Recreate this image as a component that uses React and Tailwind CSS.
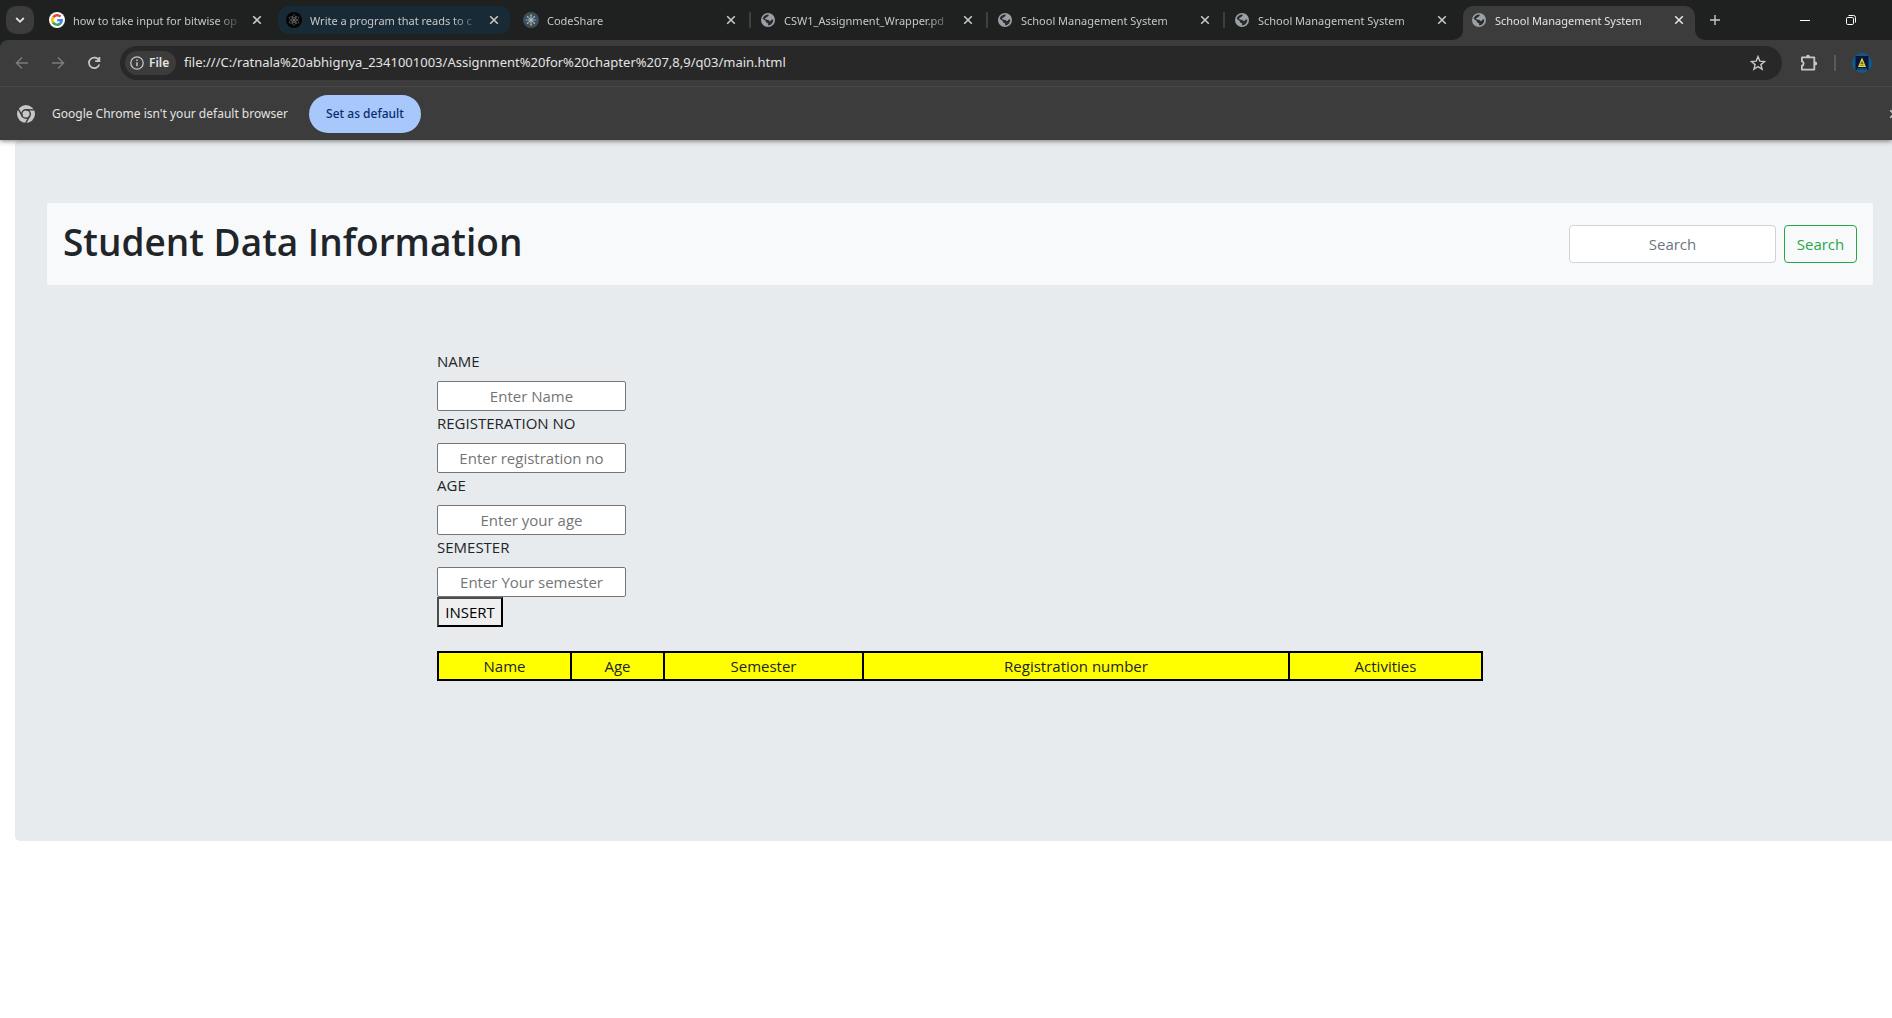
import React from 'react';

function GoogleIcon() {
  return (
    <svg viewBox="0 0 16 16" className="size-4 shrink-0" aria-hidden="true">
      <circle cx="8" cy="8" r="8" fill="#fff" />
      <g fill="none" strokeWidth="2.4">
        <path d="M4.2 5.4A4.8 4.8 0 0 1 11.6 4.6" stroke="#ea4335" />
        <path d="M4.2 5.2A4.8 4.8 0 0 0 4.2 10.8" stroke="#fbbc05" />
        <path d="M4 10.5A4.8 4.8 0 0 0 11.2 11.5" stroke="#34a853" />
        <path d="M11 11.7A4.8 4.8 0 0 0 12.8 8.2H8.2" stroke="#4285f4" />
      </g>
    </svg>
  );
}

const spokes = [0, 45, 90, 135, 180, 225, 270, 315];

function AtomIcon() {
  return (
    <svg viewBox="0 0 16 16" className="size-4 shrink-0" aria-hidden="true">
      <circle cx="8" cy="8" r="8" fill="#050505" />
      <g fill="none" stroke="#a9a9a9" strokeWidth="0.7" strokeDasharray="0.8 0.7">
        <ellipse cx="8" cy="8" rx="2" ry="5.3" />
        <ellipse cx="8" cy="8" rx="2" ry="5.3" transform="rotate(60 8 8)" />
        <ellipse cx="8" cy="8" rx="2" ry="5.3" transform="rotate(120 8 8)" />
      </g>
      <circle cx="8" cy="8" r="1" fill="#8a8a8a" />
    </svg>
  );
}

function CodeShareIcon() {
  const tips = ['#f0c35a', '#63d2e8', '#e8596b', '#63d2e8', '#f0c35a', '#63d2e8', '#e8596b', '#63d2e8'];
  return (
    <svg viewBox="0 0 16 16" className="size-4 shrink-0" aria-hidden="true">
      <circle cx="8" cy="8" r="8" fill="#3b4f5c" />
      {spokes.map((a, i) => (
        <g key={a} transform={`rotate(${a} 8 8)`}>
          <path d="M8 8V4.6" stroke="#b9c3cb" strokeWidth="1" />
          <path d="M8 4.4V2.6" stroke={tips[i]} strokeWidth="1.4" />
        </g>
      ))}
    </svg>
  );
}

function GlobeIcon() {
  return (
    <svg viewBox="0 0 16 16" className="size-4 shrink-0" aria-hidden="true">
      <circle cx="8" cy="8" r="7" fill="#9aa0a6" />
      <path
        d="M8.6 2.6C9 4 8.2 4.6 7 5c-.4 1-1 1.2-2 1.3.2 1 1 1.1 2.2 1.1 1.2 0 2 .5 2.1 1.6 1 .2 1.7-.2 2-1.2.6-.4 1.2-.5 2-.3C13.4 10.8 11 13.4 8.1 13.4v-1.3c0-.7-.5-1.2-1.3-1.3-.8-.2-1.1-.8-1.1-1.7L2.7 6.7C3.3 4.4 5.6 2.5 8.6 2.6Z"
        fill="#2b2c2c"
      />
      <path d="M4.8 6.4C5 5.9 6.2 6 7 5.2l1.6-.4 2 1.4-.6 1.6H7Z" fill="#9aa0a6" />
    </svg>
  );
}

function CloseIcon() {
  return (
    <svg viewBox="0 0 10 10" className="size-[10px]" fill="none" stroke="currentColor" strokeWidth="1.6" aria-hidden="true">
      <path d="M1.2 1.2l7.6 7.6M8.8 1.2L1.2 8.8" />
    </svg>
  );
}

function ChromeIcon() {
  return (
    <svg viewBox="0 0 18 18" className="size-[18px] shrink-0" aria-hidden="true">
      <circle cx="9" cy="9" r="9" fill="#c7c7c7" />
      <circle cx="9" cy="9" r="4.3" fill="none" stroke="#3c3c3c" strokeWidth="1.5" />
      <g stroke="#3c3c3c" strokeWidth="1.4" fill="none">
        <path d="M9 4.8H17.5" />
        <path d="M9 4.8H17.5" transform="rotate(120 9 9)" />
        <path d="M9 4.8H17.5" transform="rotate(240 9 9)" />
      </g>
    </svg>
  );
}

const tabs = [
  { title: 'how to take input for bitwise op', Icon: GoogleIcon },
  { title: 'Write a program that reads to c', Icon: AtomIcon, tinted: true },
  { title: 'CodeShare', Icon: CodeShareIcon, divider: true },
  { title: 'CSW1_Assignment_Wrapper.pd', Icon: GlobeIcon, divider: true },
  { title: 'School Management System', Icon: GlobeIcon, divider: true },
  { title: 'School Management System', Icon: GlobeIcon },
  { title: 'School Management System', Icon: GlobeIcon, active: true },
];

function Tab({ title, Icon, tinted, divider, active }) {
  const shape = active
    ? 'rounded-t-[10px] bg-[#3c3c3c] text-[#e3e3e3] h-[34px] pb-[6px]'
    : tinted
      ? 'rounded-[10px] bg-[#182a35] text-[#c7c7c7] h-7'
      : 'text-[#c7c7c7] h-7';
  return (
    <div className="relative w-[237px] min-w-0 pr-1 pl-px">
      <div className={`relative flex items-center pr-[11px] pl-2 ${shape}`}>
        <Icon />
        <a
          href="#tab"
          className="ml-2 h-5 min-w-0 flex-1 overflow-hidden text-[11px] leading-[22px] whitespace-nowrap [mask-image:linear-gradient(to_right,#000_calc(100%-28px),transparent)]"
        >
          {title}
        </a>
        <button type="button" aria-label={`Close ${title}`} className="ml-2 shrink-0">
          <CloseIcon />
        </button>
        {active && (
          <>
            <svg viewBox="0 0 10 10" className="absolute bottom-0 -left-[10px] size-[10px]" aria-hidden="true">
              <path d="M10 0V10H0A10 10 0 0 0 10 0Z" fill="#3c3c3c" />
            </svg>
            <svg viewBox="0 0 10 10" className="absolute -right-[10px] bottom-0 size-[10px]" aria-hidden="true">
              <path d="M0 0V10H10A10 10 0 0 1 0 0Z" fill="#3c3c3c" />
            </svg>
          </>
        )}
      </div>
      {divider && <span className="absolute top-[6px] right-0 h-4 w-[2px] rounded bg-[#3f4040]" />}
    </div>
  );
}

function TabStrip() {
  return (
    <div className="flex h-10 bg-[#1f2020] pt-[6px] pl-[6px]">
      <button type="button" aria-label="Search tabs" className="mr-[6px] flex size-7 shrink-0 items-center justify-center rounded-[10px] bg-[#3c3c3c] text-[#e3e3e3]">
        <svg viewBox="0 0 10 10" className="size-[10px]" fill="none" stroke="currentColor" strokeWidth="1.8" aria-hidden="true">
          <path d="M1.2 3L5 6.8 8.8 3" />
        </svg>
      </button>
      {tabs.map((tab, i) => (
        <Tab key={i} {...tab} />
      ))}
      <button type="button" aria-label="New tab" className="ml-[11px] flex h-7 w-[10px] shrink-0 items-center text-[#c7c7c7]">
        <svg viewBox="0 0 10 10" className="size-[10px]" fill="none" stroke="currentColor" strokeWidth="1.4" aria-hidden="true">
          <path d="M5 0v10M0 5h10" />
        </svg>
      </button>
      <div className="mr-9 ml-auto flex h-7 items-center gap-9 text-white">
        <button type="button" aria-label="Minimize">
          <svg viewBox="0 0 10 10" className="size-[10px]" fill="none" stroke="currentColor" aria-hidden="true">
            <path d="M0 5.5h10" />
          </svg>
        </button>
        <button type="button" aria-label="Restore">
          <svg viewBox="0 0 10 10" className="size-[10px] overflow-visible" fill="none" stroke="currentColor" aria-hidden="true">
            <rect x="0.5" y="2.5" width="7" height="7" rx="1.2" />
            <path d="M2.5 0.5H7.5A2 2 0 0 1 9.5 2.5V7.5" />
          </svg>
        </button>
      </div>
    </div>
  );
}

function Toolbar() {
  return (
    <div className="bg-[#1f2020]">
      <div className="flex items-center rounded-tl-lg border-b border-[#474747] bg-[#3c3c3c] py-[6px] pr-5 pl-[14px]">
        <button type="button" aria-label="Back" className="flex size-4 text-[#7b7b7b]">
          <svg viewBox="0 0 16 16" className="size-4" fill="none" stroke="currentColor" strokeWidth="1.5" aria-hidden="true">
            <path d="M14 8H3M8 2.5L2.5 8 8 13.5" />
          </svg>
        </button>
        <button type="button" aria-label="Forward" className="ml-5 flex size-4 text-[#7b7b7b]">
          <svg viewBox="0 0 16 16" className="size-4" fill="none" stroke="currentColor" strokeWidth="1.5" aria-hidden="true">
            <path d="M2 8h11M8 2.5L13.5 8 8 13.5" />
          </svg>
        </button>
        <button type="button" aria-label="Reload" className="ml-5 flex size-4 text-[#c7c7c7]">
          <svg viewBox="0 0 16 16" className="size-4" fill="none" stroke="currentColor" strokeWidth="1.7" aria-hidden="true">
            <path d="M13 5.5A5.3 5.3 0 1 0 13.3 9.5M13.4 2v4.2H9.2" />
          </svg>
        </button>
        <div className="ml-[18px] flex h-[34px] flex-1 items-center rounded-full bg-[#282828] pr-4 pl-[5px]">
          <button type="button" className="flex h-6 w-[51px] shrink-0 items-center gap-[5px] rounded-full bg-[#3c3c3c] pl-[5px] text-[12px] font-semibold text-[#e3e3e3]">
            <svg viewBox="0 0 14 14" className="size-[14px]" fill="none" stroke="#c7c7c7" strokeWidth="1.3" aria-hidden="true">
              <circle cx="7" cy="7" r="6.2" />
              <path d="M7 6.2v4M7 3.6v1.5" strokeWidth="1.5" />
            </svg>
            File
          </button>
          <input
            aria-label="Address"
            readOnly
            value="file:///C:/ratnala%20abhignya_2341001003/Assignment%20for%20chapter%207,8,9/q03/main.html"
            className="ml-2 min-w-0 flex-1 bg-transparent text-[13px] text-[#e3e3e3] outline-none"
          />
          <button type="button" aria-label="Bookmark this page" className="flex size-4 text-[#c7c7c7]">
            <svg viewBox="0 0 16 16" className="size-4" fill="none" stroke="currentColor" strokeWidth="1.4" aria-hidden="true">
              <path d="M8 1.6l1.8 4.5 4.8.4-3.7 3.1 1.2 4.7L8 11.7l-4.1 2.6 1.2-4.7L1.4 6.5l4.8-.4Z" />
            </svg>
          </button>
        </div>
        <button type="button" aria-label="Extensions" className="ml-[18px] flex size-[18px] text-[#c7c7c7]">
          <svg viewBox="0 0 18 18" className="size-[18px]" aria-hidden="true">
            <path d="M1.9 3.4h12.4v12.2H1.9v-3.9a2.2 2.2 0 0 0 0-4.3Z" fill="none" stroke="currentColor" strokeWidth="1.8" strokeLinejoin="round" />
            <path d="M6 3a2 2.2 0 0 1 4 0ZM15 7.5a2.2 2 0 0 1 0 4Z" fill="currentColor" />
          </svg>
        </button>
        <span className="ml-4 h-4 w-[2px] bg-[#5a5a5a]" />
        <button type="button" aria-label="Profile" className="ml-4 flex size-5">
          <svg viewBox="0 0 20 20" className="size-5" aria-hidden="true">
            <circle cx="10" cy="10" r="10" fill="#115a87" />
            <path d="M3.5 3h13v14h-13Z" fill="#08163f" />
            <path d="M10 4.5l4 9.5H6Z" fill="#f0dc32" />
            <path d="M10 8.5l1.2 2.5H8.8ZM7.5 12.5h5" stroke="#5b5a2a" strokeWidth="0.6" fill="#5b5a2a" />
            <path d="M5 16h10" stroke="#2d6da0" />
          </svg>
        </button>
      </div>
    </div>
  );
}

function InfoBar() {
  return (
    <div className="flex h-[53px] items-center overflow-hidden bg-[#3c3c3c] pl-[17px] text-[12px] text-[#e3e3e3]">
      <ChromeIcon />
      <p className="ml-[17px] min-w-[241px] whitespace-nowrap">Google Chrome isn't your default browser</p>
      <button type="button" className="ml-4 h-[38px] w-28 shrink-0 rounded-full bg-[#a8c7fa] font-medium whitespace-nowrap text-[#062e6f]">
        Set as default
      </button>
      <button type="button" aria-label="Dismiss" className="-mr-[7px] ml-auto text-[#c7c7c7]">
        <CloseIcon />
      </button>
    </div>
  );
}

const fields = [
  { id: 'name', label: 'NAME', placeholder: 'Enter Name' },
  { id: 'reg', label: 'REGISTERATION NO', placeholder: 'Enter registration no' },
  { id: 'age', label: 'AGE', placeholder: 'Enter your age' },
  { id: 'semester', label: 'SEMESTER', placeholder: 'Enter Your semester' },
];

const columns = [
  { name: 'Name', width: 'w-[133px]' },
  { name: 'Age', width: 'w-[93px]' },
  { name: 'Semester', width: 'w-[199px]' },
  { name: 'Registration number', width: 'w-[426px]' },
  { name: 'Activities', width: 'w-[193px]' },
];

export default function App() {
  return (
    <div className="min-h-screen overflow-x-hidden bg-white font-['Open_Sans','Noto_Sans',sans-serif]">
      <header className="relative font-['Noto_Sans','Open_Sans',sans-serif] shadow-[0_1px_5px_rgba(0,0,0,0.5)]">
        <TabStrip />
        <Toolbar />
        <InfoBar />
      </header>
      <main className="ml-[15px] rounded-l-[5px] bg-[#e8ebee] pt-[63px] pr-[19px] pb-40 pl-8 text-[15px] leading-6 text-[#212529]">
        <nav className="flex items-center justify-between bg-[#f8f9fb] px-4 py-[13px]">
          <h1 className="pb-1 text-[37px] leading-[52px] font-semibold">Student Data Information</h1>
          <form className="flex gap-2">
            <input
              type="text"
              aria-label="Search"
              placeholder="Search"
              className="h-[38px] w-[207px] rounded border border-[#ced4da] bg-white px-3 text-center placeholder:text-[#6c757d]"
            />
            <button type="button" className="h-[38px] w-[73px] rounded border border-[#28a745] text-[#28a745]">
              Search
            </button>
          </form>
        </nav>
        <section className="mx-auto mt-16 max-w-[1046px]">
          <form className="flex flex-col items-start">
            {fields.map((f) => (
              <React.Fragment key={f.id}>
                <label htmlFor={f.id} className="mb-2">
                  {f.label}
                </label>
                <input
                  id={f.id}
                  placeholder={f.placeholder}
                  className="h-[30px] w-[189px] rounded-[2px] border border-[#767676] bg-white text-center placeholder:text-[#757575]"
                />
              </React.Fragment>
            ))}
            <button type="button" className="h-[30px] w-[66px] border-2 border-t-[#4d4d4d] border-r-black border-b-black border-l-[#4d4d4d] bg-[#efefef] leading-none text-black">
              INSERT
            </button>
          </form>
          <table className="mt-6 w-full table-fixed border-collapse border-2 border-black bg-[#ffff00]">
            <thead>
              <tr>
                {columns.map((c) => (
                  <th key={c.name} scope="col" className={`${c.width} border-2 border-black p-px text-center font-normal`}>
                    {c.name}
                  </th>
                ))}
              </tr>
            </thead>
          </table>
        </section>
      </main>
    </div>
  );
}
